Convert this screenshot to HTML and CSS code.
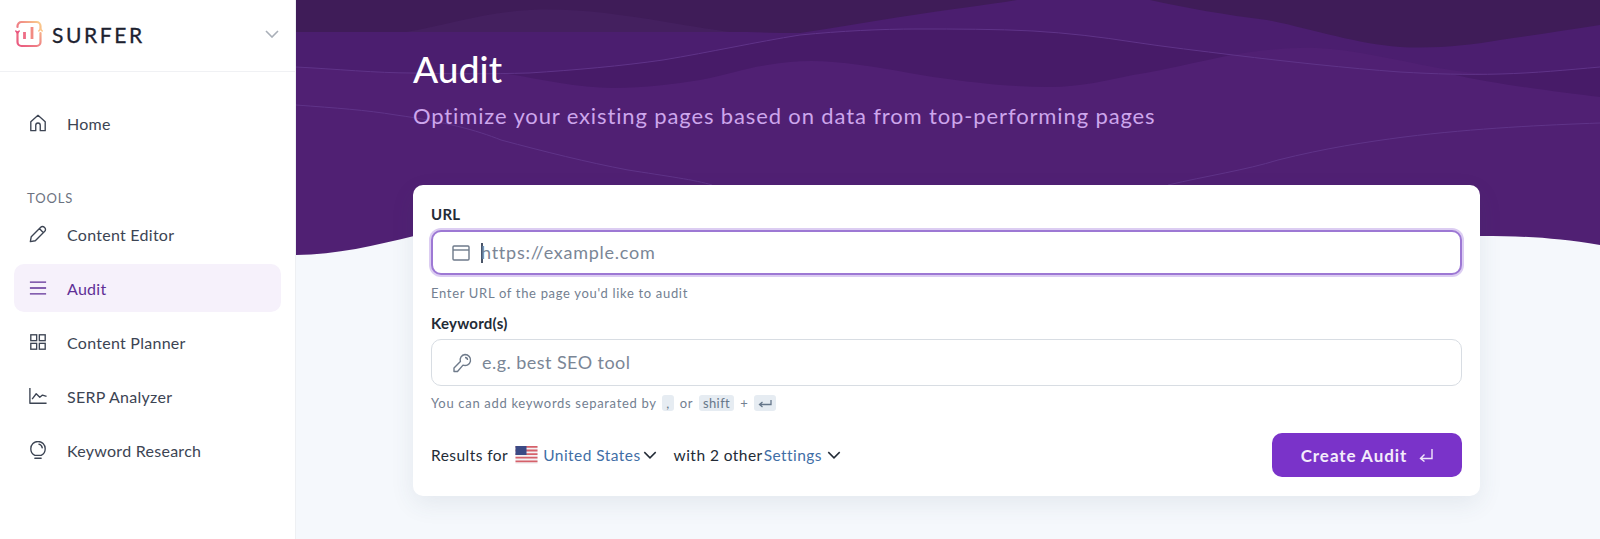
FILE: index.html
```html
<!DOCTYPE html>
<html lang="en">
<head>
<meta charset="utf-8">
<title>Audit</title>
<link rel="stylesheet" href="styles.css">
</head>
<body>
<aside class="sidebar">
  <div class="brand">
    <svg class="brand-logo" viewBox="0 0 28 28" fill="none" stroke-width="2.2" stroke-linecap="round">
      <defs><linearGradient id="lg" x1="0" y1="1" x2="1" y2="0"><stop offset="0" stop-color="#e9557f"/><stop offset="0.55" stop-color="#f08a86"/><stop offset="1" stop-color="#fbd08c"/></linearGradient></defs>
      <path d="M2.500 7V6a4 4 0 0 1 4-4h15a4 4 0 0 1 4 4v3M25.500 13v9a4 4 0 0 1-4 4h-15a4 4 0 0 1-4-4V12" stroke="url(#lg)"/>
      <path d="M.800 11l1.700 2 1.700-2" stroke="#e9557f" stroke-width="1.500"/>
      <path d="M23.800 11l1.700-2 1.700 2" stroke="#fbc68a" stroke-width="1.500"/>
      <path d="M9.500 12v7" stroke="#ee6d86" stroke-width="2.800" stroke-linecap="butt"/>
      <path d="M17 7v12" stroke="#f28a82" stroke-width="2.800" stroke-linecap="butt"/>
    </svg>
    <span class="brand-name">SURFER</span>
    <svg class="brand-chevron" viewBox="0 0 14 8" fill="none" stroke="#a9afb8" stroke-width="1.600"><path d="M1 1l6 6 6-6"/></svg>
  </div>
  <nav class="nav">
    <a class="nav-item">
      <svg class="nav-icon" viewBox="0 0 20 20" fill="none" stroke="#3c4453" stroke-width="1.500" stroke-linejoin="round"><path d="M2 18.500V8.500L10 1.500l8 7v10h-5.500v-6a2.500 2.500 0 0 0-5 0v6z"/></svg>
      <span>Home</span>
    </a>
    <div class="nav-title">TOOLS</div>
    <a class="nav-item">
      <svg class="nav-icon" viewBox="0 0 20 20" fill="none" stroke="#3c4453" stroke-width="1.500" stroke-linejoin="round"><path d="M1.500 18.500l1-5.500L13 2.500a2.800 2.800 0 0 1 4 0l.5.5a2.800 2.800 0 0 1 0 4L7 17.500zM11.500 4l4.500 4.500"/></svg>
      <span>Content Editor</span>
    </a>
    <a class="nav-item active">
      <svg class="nav-icon" viewBox="0 0 20 20" fill="none" stroke="#5f2f96" stroke-width="1.500"><path d="M1 3.500h18M1 10h18M1 16.500h18"/></svg>
      <span>Audit</span>
    </a>
    <a class="nav-item">
      <svg class="nav-icon" viewBox="0 0 20 20" fill="none" stroke="#3c4453" stroke-width="1.500"><rect x="2" y="2" width="6.500" height="6.500"/><rect x="11.500" y="2" width="6.500" height="6.500"/><rect x="2" y="11.500" width="6.500" height="6.500"/><rect x="11.500" y="11.500" width="6.500" height="6.500"/></svg>
      <span>Content Planner</span>
    </a>
    <a class="nav-item">
      <svg class="nav-icon" viewBox="0 0 20 20" fill="none" stroke="#3c4453" stroke-width="1.500" stroke-linejoin="round"><path d="M1 1v17h18.500M3.500 13.500L8 7.500l4 4 3-2.500 4.500 1.500"/></svg>
      <span>SERP Analyzer</span>
    </a>
    <a class="nav-item">
      <svg class="nav-icon" viewBox="0 0 20 20" fill="none" stroke="#3c4453" stroke-width="1.500" stroke-linecap="round" stroke-linejoin="round"><path d="M6.500 16C3.500 14.500 2 11.500 2 8.500a8 8 0 0 1 16 0c0 3-1.500 6-4.500 7.500zM6.500 19.200h7M11 3.500c2 .5 3.300 2 3.700 4"/></svg>
      <span>Keyword Research</span>
    </a>
  </nav>
</aside>
<main class="main">
  <svg class="waves" viewBox="0 0 1304 256" preserveAspectRatio="none">
    <path class="wave-base" d="M0 0H1304V245C1260 238 1230 236 1185 236H118C80 245 40 255 0 255Z"/>
    <path class="wave-mid" d="M0 67C40 69 80 73 117 73C160 74 195 74 233 73C280 70 325 66 367 60C415 52 460 42 504 35C545 31 585 29 621 29C660 29 700 29 737 31C772 33 805 37 837 42C870 47 905 51 937 55C965 50 995 47 1021 48C1060 50 1100 60 1137 67C1160 71 1180 74 1204 74C1240 73 1270 70 1304 67V0H0Z"/>
    <path class="wave-deep" d="M205 73C240 78 280 88 317 88C350 88 378 84 404 80C430 75 450 68 471 65C495 61 515 60 537 62C575 65 605 72 637 77C680 83 715 87 754 87C785 87 812 80 837 75C870 70 900 62 935 55C905 51 870 47 837 42C805 37 772 33 737 31C700 29 660 29 621 29C585 29 545 31 504 35C460 42 415 52 367 60C325 66 280 70 233 73Z"/>
    <path class="wave-deep" d="M1154 74C1200 84 1260 92 1304 97V67C1270 70 1240 73 1204 74C1185 75 1170 75 1154 74Z"/>
    <path class="wave-dark" d="M0 0V32H434C460 32 480 33 504 33C540 28 570 22 604 17C650 10 690 5 721 0H854C890 8 930 15 971 20C1020 30 1060 44 1104 47C1140 49 1175 45 1204 40C1240 35 1270 30 1304 25V0Z"/>
    <path class="wave-bump" d="M110 32C150 25 190 12 234 10C280 8 320 14 370 22C400 27 420 30 434 32Z"/>
    <path class="wave-line" d="M0 67C40 69 80 73 117 73C160 74 195 74 233 73C280 70 325 66 367 60C415 52 460 42 504 35C545 31 585 29 621 29C660 29 700 29 737 31C772 33 805 37 837 42C870 47 905 51 937 55C995 62 1050 68 1104 72C1140 74 1170 75 1204 74C1240 73 1270 70 1304 67"/>
    <path class="wave-line" d="M0 105C40 108 70 110 100 115C150 122 180 130 205 140C250 152 290 162 332 170C370 176 400 180 416 185"/>
    <path class="wave-line" d="M872 185C910 176 950 170 982 160C1030 148 1070 142 1108 137C1180 128 1250 125 1304 123"/>
  </svg>
  <div class="content">
    <header class="page-head">
      <h1 class="page-title">Audit</h1>
      <p class="page-sub">Optimize your existing pages based on data from top-performing pages</p>
    </header>
    <section class="card">
      <label class="field-label">URL</label>
      <div class="input input-focus">
        <svg class="input-icon" viewBox="0 0 18 16" fill="none" stroke="#6e7a8a" stroke-width="1.400"><rect x="1" y="1" width="16" height="14" rx="1"/><path d="M1 5h16"/></svg>
        <span class="caret"></span>
        <span class="placeholder">https://example.com</span>
      </div>
      <p class="hint hint-url">Enter URL of the page you'd like to audit</p>
      <label class="field-label">Keyword(s)</label>
      <div class="input">
        <svg class="input-icon input-icon-key" viewBox="0 0 20 20" fill="none" stroke="#6e7a8a" stroke-width="1.400" stroke-linejoin="round"><path d="M13 1.500a5.500 5.500 0 1 1-2 10.600L5.500 18.500H2v-3.500l6.400-6.400A5.500 5.500 0 0 1 13 1.500z"/><path d="M13 4.500a2.500 2.500 0 0 1 2.500 2.500"/></svg>
        <span class="placeholder placeholder-kw">e.g. best SEO tool</span>
      </div>
      <p class="hint hint-kw">You can add keywords separated by <kbd class="kbd">,</kbd> or <kbd class="kbd">shift</kbd> + <kbd class="kbd"><svg class="kbd-icon" viewBox="0 0 14 8" fill="none" stroke="#66778a" stroke-width="1.300"><path d="M13 0v4.500H2M4.500 2L1.500 4.500 4.500 7"/></svg></kbd></p>
      <div class="actions">
        <div class="options">
          <span class="opt-results">Results for</span>
          <svg class="flag" viewBox="0 0 22 18">
            <rect width="22" height="18" fill="#f4f2f4"/>
            <path d="M0 0h22v1.800H0zM0 3.600h22v1.800H0zM0 7.200h22V9H0zM0 10.800h22v1.800H0zM0 14.400h22v1.800H0z" fill="#d5616a"/>
            <rect width="11" height="9" fill="#3b4a85"/>
          </svg>
          <a class="opt-link">United States</a>
          <svg class="chev chev-a" viewBox="0 0 12 7" fill="none" stroke="#222b36" stroke-width="1.300"><path d="M1 1l5 5 5-5"/></svg>
          <span class="opt-with">with 2 other</span>
          <a class="opt-link opt-settings">Settings</a>
          <svg class="chev chev-b" viewBox="0 0 12 7" fill="none" stroke="#222b36" stroke-width="1.300"><path d="M1 1l5 5 5-5"/></svg>
        </div>
        <button class="btn" type="button">
          <span>Create Audit</span>
          <svg class="btn-icon" viewBox="0 0 14 14" fill="none" stroke="#f0e6fa" stroke-width="1.400"><path d="M13 1v9.500H1.500M5.500 6.500l-4 4 4 3"/></svg>
        </button>
      </div>
    </section>
  </div>
</main>
</body>
</html>
```
FILE: styles.css
```css
* { box-sizing: border-box; }
html, body { height: 100%; }
body {
  margin: 0;
  height: 539px;
  overflow: hidden;
  display: flex;
  background: #f5f8fc;
  font-family: Lato, "Open Sans", sans-serif;
  color: #232b36;
}
.sidebar {
  width: 296px;
  flex: none;
  background: #fff;
  border-right: 1px solid #eef0f3;
}
.brand {
  height: 72px;
  display: flex;
  align-items: center;
  padding: 0 16px 3px 15px;
  border-bottom: 1px solid #f0f1f4;
}
.brand-logo { width: 28px; height: 28px; flex: none; }
.brand-name {
  margin-left: 9px;
  font-size: 21px;
  font-weight: 400;
  letter-spacing: 2.6px;
  color: #1d2230;
  -webkit-text-stroke: 0.3px #1d2230;
}
.brand-chevron { width: 14px; height: 8px; margin-left: auto; }
.nav {
  padding: 27px 14px 0;
  display: flex;
  flex-direction: column;
  gap: 6px;
}
.nav-item {
  height: 48px;
  display: flex;
  align-items: center;
  gap: 20px;
  padding: 0 15px;
  border-radius: 10px;
  font-size: 16px;
  letter-spacing: 0.27px;
  color: #3c4453;
}
.nav-item.active { background: #f6f1fb; color: #5f2f96; }
.nav-icon { width: 18px; height: 18px; flex: none; }
.nav-title {
  margin: 38px 0 -1px 13px;
  height: 14px;
  font-size: 13px;
  line-height: 14px;
  letter-spacing: 0.9px;
  color: #6b7280;
}
.main {
  position: relative;
  flex: 1;
  min-width: 0;
}
.waves {
  position: absolute;
  left: 0;
  top: 0;
  width: 100%;
  height: 256px;
}
.wave-base { fill: #502073; }
.wave-mid { fill: #4b1e6f; }
.wave-deep { fill: #471b68; }
.wave-dark { fill: #3f1c58; }
.wave-bump { fill: #44205f; }
.wave-line { fill: none; stroke: #5f3388; stroke-width: 1; }
.content {
  position: relative;
  padding: 0 120px 0 117px;
}
.page-head { height: 185px; padding-top: 47px; }
.page-title {
  margin: 0;
  font-size: 37px;
  line-height: 44px;
  font-weight: 500;
  color: #fff;
  letter-spacing: 0.1px;
}
.page-sub {
  margin: 10px 0 0;
  font-size: 22px;
  line-height: 30px;
  color: #cda6ec;
  letter-spacing: 0.87px;
}
.card {
  height: 311px;
  padding: 19px 18px 0;
  background: #fff;
  border-radius: 10px;
  box-shadow: 0 8px 24px rgba(60, 75, 100, 0.09);
}
.field-label {
  display: block;
  height: 20px;
  font-size: 15px;
  line-height: 20px;
  font-weight: 700;
  letter-spacing: 0.25px;
  color: #232b36;
}
.input {
  height: 47px;
  margin-top: 6px;
  display: flex;
  align-items: center;
  padding: 0 20px;
  background: #fff;
  border: 1px solid #d8dde3;
  border-radius: 10px;
}
.input-focus {
  height: 45px;
  margin-top: 6px;
  border: 2px solid #9d78d4;
  box-shadow: 0 0 0 2px #dccdf2;
  padding-left: 19px;
}
.input-icon { width: 18px; height: 18px; flex: none; }
.input-icon-key { width: 20px; height: 20px; }
.caret { width: 2px; height: 20px; margin: 0 -2px 0 11px; background: #4a5568; flex: none; }
.placeholder {
  font-size: 18px;
  line-height: 22px;
  margin-top: -2px;
  letter-spacing: 0.75px;
  color: #7a8696;
}
.placeholder-kw { margin-left: 10px; letter-spacing: 0.45px; }
.hint {
  margin: 0;
  font-size: 13px;
  letter-spacing: 0.68px;
  color: #738091;
}
.hint-url { height: 36px; padding-top: 9px; line-height: 18px; }
.hint-url + .field-label { margin-top: 2px; }
.hint-kw { height: 29px; padding-top: 8px; line-height: 18px; }
.kbd {
  display: inline-block;
  padding: 0 4px;
  margin: 0 2px;
  background: #e6ecf2;
  border-radius: 3px;
  font-family: inherit;
  font-size: 13px;
  line-height: 16px;
  letter-spacing: 0.4px;
  color: #66778a;
}
.kbd-icon { width: 14px; height: 8px; }
.actions {
  margin-top: 18px;
  height: 44px;
  display: flex;
  align-items: center;
  justify-content: space-between;
}
.options {
  display: flex;
  align-items: center;
  font-size: 15.500px;
  letter-spacing: 0.45px;
  color: #232b36;
}
.flag { width: 23px; height: 18px; margin-left: 7px; }
.opt-link { color: #3f6ea6; margin-left: 5px; }
.chev { width: 14px; height: 8px; }
.chev-a { margin-left: 2px; }
.opt-with { margin-left: 17px; }
.opt-settings { margin-left: 1px; }
.chev-b { margin-left: 5px; }
.btn {
  width: 190px;
  height: 44px;
  display: flex;
  align-items: center;
  justify-content: center;
  gap: 12px;
  background: #7a33c9;
  border: 0;
  border-radius: 10px;
  font-family: inherit;
  font-size: 17px;
  font-weight: 700;
  letter-spacing: 0.95px;
  color: #f4ecfb;
}
.btn-icon { width: 14px; height: 14px; }
```
